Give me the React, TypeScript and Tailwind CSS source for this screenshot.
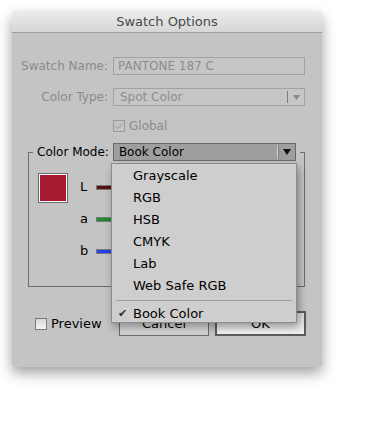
import { Check } from "lucide-react";

const font = { fontFamily: '"DejaVu Sans", "Liberation Sans", sans-serif' };

const modes = ["Grayscale", "RGB", "HSB", "CMYK", "Lab", "Web Safe RGB"];

const channels = [
  { label: "L", bar: "bg-[#5a0e12]" },
  { label: "a", bar: "bg-[#1f8a2e]" },
  { label: "b", bar: "bg-[#2140f0]" },
];

export default function App() {
  return (
    <div className="w-[377px] h-[422px] bg-white relative text-[12px]" style={font}>
      <div className="absolute left-[12px] top-[11px] w-[310px] h-[356px] bg-[#c4c4c4] rounded-t-[5px] rounded-b-[3px] shadow-[0_6px_14px_rgba(0,0,0,0.38)] flex flex-col">
        {/* Title bar */}
        <div className="h-[22px] rounded-t-[5px] bg-gradient-to-b from-[#ececec] to-[#d6d6d6] border-b border-[#9c9c9c] flex items-center justify-center text-[13px] text-[#4a4a4a]">
          Swatch Options
        </div>

        {/* Swatch name */}
        <div className="flex items-center mt-[24px] h-[18px]">
          <div className="w-[96px] text-right text-[#8a8a8a]">Swatch Name:</div>
          <div className="ml-[5px] w-[192px] h-[18px] border border-[#a2a2a2] bg-[#c6c6c6] text-[#8c8c8c] pl-[4px] leading-[16px]">
            PANTONE 187 C
          </div>
        </div>

        {/* Color type */}
        <div className="flex items-center mt-[13px] h-[18px]">
          <div className="w-[96px] text-right text-[#8a8a8a]">Color Type:</div>
          <div className="ml-[5px] w-[192px] h-[18px] border border-[#a2a2a2] bg-[#c6c6c6] text-[#8c8c8c] flex items-center">
            <span className="pl-[6px] flex-1">Spot Color</span>
            <span className="w-px h-[12px] bg-[#7c7c7c]" />
            <span className="w-[16px] flex justify-center">
              <svg width="7" height="5" viewBox="0 0 7 5"><path d="M0 0h7L3.5 5z" fill="#8a8a8a" /></svg>
            </span>
          </div>
        </div>

        {/* Global */}
        <div className="flex items-center mt-[11px] ml-[101px] gap-[4px] text-[#8a8a8a]">
          <span className="w-[12px] h-[12px] border border-[#9a9a9a] flex items-center justify-center">
            <Check size={11} strokeWidth={2} color="#8a8a8a" />
          </span>
          <span>Global</span>
        </div>

        {/* Color Mode group */}
        <fieldset className="mt-[8px] ml-[16px] w-[277px] h-[144px] border border-[#6e6e6e] px-0">
          <legend className="ml-[4px] px-[4px] flex items-center text-black">
            <span className="pr-[4px]">Color Mode:</span>
            <span className="w-[183px] h-[18px] border border-[#6a6a6a] bg-[#9e9e9e] flex items-center">
              <span className="pl-[5px] flex-1">Book Color</span>
              <span className="w-px h-[14px] bg-[#d6d6d6]" />
              <span className="w-px h-[14px] bg-[#777]" />
              <span className="w-[16px] flex justify-center">
                <svg width="8" height="6" viewBox="0 0 8 6"><path d="M0 0h8L4 6z" fill="#111" /></svg>
              </span>
            </span>
          </legend>

          <div className="flex pl-[9px] pt-[12px]">
            <div className="w-[30px] h-[30px] border border-[#6a6a6a] bg-white p-px">
              <div className="w-full h-full bg-[#a51a2e]" />
            </div>
            <div className="flex flex-col ml-[12px] gap-[14px] mt-[5px]">
              {channels.map((c) => (
                <div key={c.label} className="flex items-center h-[18px]">
                  <span className="w-[16px] text-black text-[13px]">{c.label}</span>
                  <span className={`w-[190px] h-[5px] border border-[#777] ${c.bar}`} />
                </div>
              ))}
            </div>
          </div>
        </fieldset>

        {/* Buttons */}
        <div className="flex items-center mt-[24px] h-[25px]">
          <div className="flex items-center ml-[23px] gap-[4px] w-[84px]">
            <span className="w-[12px] h-[12px] border border-[#7a7a7a] bg-gradient-to-b from-[#d8d8d8] to-[#f4f4f4]" />
            <span className="text-black text-[13px]">Preview</span>
          </div>
          <div className="w-[90px] h-[25px] border border-[#6a6a6a] bg-gradient-to-b from-[#e2e2e2] to-[#d0d0d0] flex items-center justify-center text-black text-[13px]">
            Cancel
          </div>
          <div className="ml-[6px] w-[91px] h-[25px] border-2 border-[#5c5c5c] bg-gradient-to-b from-[#dcdcdc] to-[#f2f2f2] flex items-center justify-center text-black text-[13px]">
            OK
          </div>
        </div>

        {/* Open dropdown menu */}
        <div className="absolute left-[99px] top-[152px] w-[186px] h-[160px] bg-[#cecece] border border-[#8c8c8c] shadow-[2px_4px_8px_rgba(0,0,0,0.35)] pt-px text-black text-[13px]">
          {modes.map((m) => (
            <div key={m} className="h-[22px] flex items-center pl-[21px]">
              {m}
            </div>
          ))}
          <div className="h-[6px] flex items-center px-[4px]">
            <div className="w-full h-px bg-[#9c9c9c]" />
          </div>
          <div className="h-[22px] flex items-center">
            <span className="w-[21px] text-center text-[11px] text-[#333]">✔</span>
            Book Color
          </div>
        </div>
      </div>
    </div>
  );
}
